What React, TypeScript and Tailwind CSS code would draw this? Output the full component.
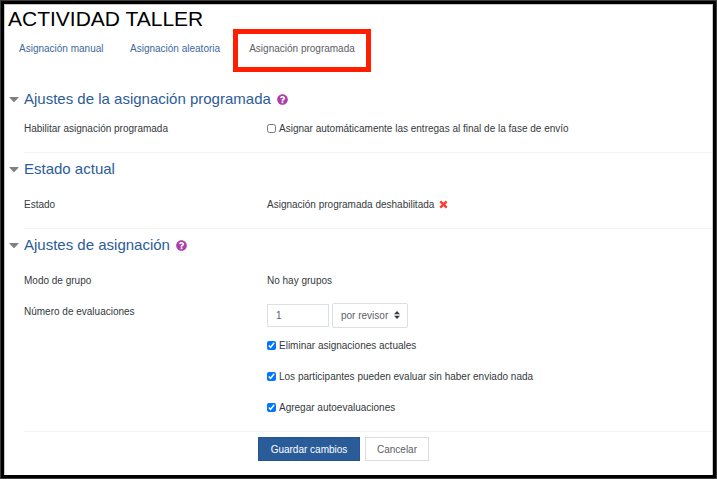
import { ReactNode, useState } from 'react';
import { FaQuestionCircle } from 'react-icons/fa';

interface SectionProps {
  title: string;
  help?: boolean;
  first?: boolean;
  children: ReactNode;
}

const Section = ({ title, help, first, children }: SectionProps) => {
  const [open, setOpen] = useState(true);

  return (
    <section className="flex pl-1">
      <button
        type="button"
        aria-label={title}
        aria-expanded={open}
        onClick={() => setOpen(!open)}
        className={`flex h-6 w-[15px] shrink-0 items-center ${first ? '' : 'mt-[5px]'}`}
      >
        <svg viewBox="0 0 10 5" className="h-[5px] w-[10px] fill-[#808080]">
          <path d="M1 0h8q1 0 .4.7L5.6 4.7q-.6.5-1.2 0L.6.7Q0 0 1 0z" />
        </svg>
      </button>
      <div
        className={`grow pb-2 ${first ? '' : 'border-t border-[#f3f3f3] pt-1'}`}
      >
        <h3
          className={`flex h-6 items-center gap-[6px] text-[15px] text-[#2c5c98] ${first ? 'mb-[2px]' : 'mb-2'}`}
        >
          {title}
          {help && (
            <button type="button" aria-label="Ayuda">
              <FaQuestionCircle className="size-[11px] text-[#ac3fac]" />
            </button>
          )}
        </h3>
        {open && children}
      </div>
    </section>
  );
};

interface RowProps {
  label?: ReactNode;
  children: ReactNode;
}

const Row = ({ label, children }: RowProps) => (
  <div className="grid grid-cols-[243px_1fr] leading-[31px]">
    <div>{label}</div>
    <div className="flex items-center">{children}</div>
  </div>
);

interface CheckProps {
  id: string;
  label: string;
  checked?: boolean;
}

const Check = ({ id, label, checked }: CheckProps) => (
  <>
    <input
      id={id}
      type="checkbox"
      defaultChecked={checked}
      className="mr-[3px] size-[9px] accent-[#0075ff]"
    />
    <label htmlFor={id}>{label}</label>
  </>
);

const App = () => {
  return (
    <div className="flex min-h-screen flex-col border border-[#3c3c3c] bg-black font-['Liberation_Sans',Arial,sans-serif] text-[10px] text-[#343a40]">
      <div className="flex grow flex-col border-3 border-black">
        <main className="grow border border-b-0 border-[#c8c8c8] bg-white">
          <h1 className="pt-1 pl-[3px] text-[21px] leading-5 text-black">
            ACTIVIDAD TALLER
          </h1>
          <nav className="flex h-[43px] pl-[14px] text-[#40699f]">
            <a href="#manual" className="flex w-[111px] items-center pb-1">
              Asignación manual
            </a>
            <a href="#aleatoria" className="flex w-[103px] items-center pb-1">
              Asignación aleatoria
            </a>
            <a
              href="#programada"
              className="flex w-[138px] items-center justify-center border-5 border-[#ff1f00] pb-1 text-[#5b6068]"
            >
              Asignación programada
            </a>
          </nav>

          <form className="mt-[15px]" onSubmit={(e) => e.preventDefault()}>
            <Section title="Ajustes de la asignación programada" help first>
              <Row label="Habilitar asignación programada">
                <Check
                  id="enable"
                  label="Asignar automáticamente las entregas al final de la fase de envío"
                />
              </Row>
            </Section>

            <Section title="Estado actual">
              <Row label="Estado">
                Asignación programada deshabilitada
                <svg
                  viewBox="0 0 9 9"
                  className="ml-[5px] size-[9px] fill-none stroke-[#ff3a2f]"
                >
                  <path d="M1.3 1.3l6.4 6.4M7.7 1.3L1.3 7.7" strokeWidth="2.4" />
                </svg>
              </Row>
            </Section>

            <Section title="Ajustes de asignación" help>
              <Row label="Modo de grupo">No hay grupos</Row>
              <Row label={<label htmlFor="reviews">Número de evaluaciones</label>}>
                <div className="flex items-center gap-[3px] pt-[7px] pb-[2px] leading-4 text-[#5b6068]">
                  <input
                    id="reviews"
                    type="text"
                    defaultValue="1"
                    className="h-[23px] w-[62px] border border-[#dbe0e3] px-2"
                  />
                  <div className="relative">
                    <select
                      aria-label="por"
                      className="h-[25px] w-[76px] appearance-none rounded-xs border border-[#dbe0e3] pl-2"
                    >
                      <option>por revisor</option>
                      <option>por envío</option>
                    </select>
                    <svg
                      viewBox="0 0 6 8"
                      className="pointer-events-none absolute top-2 right-2 h-2 w-[6px] fill-[#343a40]"
                    >
                      <path d="M3 0L0 3.2h6zm0 8L0 4.8h6z" />
                    </svg>
                  </div>
                </div>
              </Row>
              <Row>
                <Check id="remove" label="Eliminar asignaciones actuales" checked />
              </Row>
              <Row>
                <Check
                  id="participants"
                  label="Los participantes pueden evaluar sin haber enviado nada"
                  checked
                />
              </Row>
              <Row>
                <Check id="self" label="Agregar autoevaluaciones" checked />
              </Row>
            </Section>

            <div className="ml-[19px] flex gap-[5px] border-t border-[#f3f3f3] pt-[5px] pb-3 pl-[234px]">
              <button
                type="submit"
                className="h-6 w-[102px] border border-[#255590] bg-[#2a5c99] text-white"
              >
                Guardar cambios
              </button>
              <button
                type="button"
                className="h-6 w-[64px] border border-[#dcdcdc] bg-white text-[#5b6068]"
              >
                Cancelar
              </button>
            </div>
          </form>
        </main>
      </div>
    </div>
  );
};

export default App;
